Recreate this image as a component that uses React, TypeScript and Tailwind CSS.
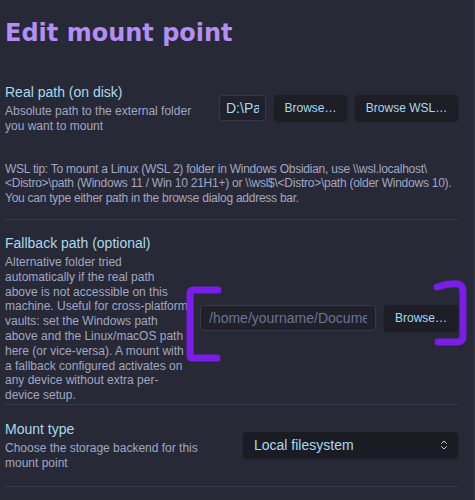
import { ChevronsUpDown } from 'lucide-react'

const body = "font-['Liberation_Sans',Arial,sans-serif]"

function Button({ label, className = '' }: { label: string; className?: string }) {
  return (
    <button
      className={`h-[26px] shrink-0 rounded-[4px] bg-[#1c1d25] text-[12px] text-[#a9d9ec] shadow-[0_1px_2px_rgba(0,0,0,0.35)] ${className}`}
    >
      {label}
    </button>
  )
}

function SettingItem({
  name,
  desc,
  border = true,
  className = '',
  infoClass = '',
  children,
}: {
  name: string
  desc: string
  border?: boolean
  className?: string
  infoClass?: string
  children: React.ReactNode
}) {
  return (
    <div className={`flex items-center justify-between ${border ? 'border-t border-[#393b4d]' : ''} ${className}`}>
      <div className={`shrink-0 ${infoClass}`}>
        <div className="text-[14px] leading-[18px] text-[#a9d9ec]">{name}</div>
        <div className="mt-[3px] text-[12px] leading-[14.8px] text-[#a2a7c1]">{desc}</div>
      </div>
      <div className="flex shrink-0 items-center gap-[8px]">{children}</div>
    </div>
  )
}

export default function App() {
  return (
    <div className={`relative flex h-[500px] w-[475px] overflow-hidden bg-[#272936] ${body}`}>
      <div className="flex-1 pl-[5px] pr-[15px]">
        <h1 className="mt-[18px] font-['DejaVu_Sans',sans-serif] text-[24px] font-bold leading-[30px] text-[#b38ef3]">
          Edit mount point
        </h1>

        <SettingItem
          name="Real path (on disk)"
          desc="Absolute path to the external folder you want to mount"
          border={false}
          className="pt-[35px]"
          infoClass="w-[200px]"
        >
          <input
            readOnly
            value="D:\Paul\Vault"
            className="h-[26px] w-[47px] rounded-[3px] border border-[#363848] bg-[#20212b] px-[6px] text-[14px] text-[#a9d9ec] outline-none"
          />
          <Button label="Browse…" className="w-[73px]" />
          <Button label="Browse WSL…" className="w-[103px]" />
        </SettingItem>

        <p className="mt-[28px] whitespace-nowrap tracking-[-0.25px] text-[12px] leading-[14.8px] text-[#a2a7c1]">
          WSL tip: To mount a Linux (WSL 2) folder in Windows Obsidian, use \\wsl.localhost\
          <br />
          &lt;Distro&gt;\path (Windows 11 / Win 10 21H1+) or \\wsl$\&lt;Distro&gt;\path (older Windows 10).
          <br />
          You can type either path in the browse dialog address bar.
        </p>

        <SettingItem
          name="Fallback path (optional)"
          desc="Alternative folder tried automatically if the real path above is not accessible on this machine. Useful for cross-platform vaults: set the Windows path above and the Linux/macOS path here (or vice-versa). A mount with a fallback configured activates on any device without extra per-device setup."
          className="mt-[13px] pt-[14px] pb-[1px]"
          infoClass="w-[184px]"
        >
          <input
            readOnly
            placeholder="/home/yourname/Documents/Vault"
            className="h-[26px] w-[176px] rounded-[3px] border border-[#363848] bg-[#20212b] px-[8px] text-[14px] text-[#a9d9ec] outline-none placeholder:text-[#6d7391]"
          />
          <Button label="Browse…" className="w-[74px]" />
        </SettingItem>

        <SettingItem
          name="Mount type"
          desc="Choose the storage backend for this mount point"
          className="pt-[15px] pb-[15px]"
          infoClass="w-[215px]"
        >
          <div className="flex h-[26px] w-[215px] items-center justify-between rounded-[4px] bg-[#1b1c23] pl-[11px] pr-[8px] text-[14px] text-[#a9d9ec] shadow-[0_1px_2px_rgba(0,0,0,0.35)]">
            <span>Local filesystem</span>
            <ChevronsUpDown size={12} strokeWidth={2} className="text-[#c3c7d4]" />
          </div>
        </SettingItem>

        <div className="border-t border-[#393b4d]" />
      </div>
      <div className="w-[2px] shrink-0 bg-[#2f3141]" />

      {/* hand-drawn brackets over the fallback input */}
      <svg className="pointer-events-none absolute left-0 top-0" width="475" height="500">
        <g fill="none" stroke="#7a1de6" strokeWidth="7" strokeLinecap="round" strokeLinejoin="round">
          <path d="M218 290 L193 290 Q190 290 190 294 L190 356 Q190 358 193 358 L217 358" />
          <path d="M437 287 Q450 283 458 284 Q463 285 463 292 L463 336 Q463 342 457 342 L438 342" />
        </g>
      </svg>
    </div>
  )
}
